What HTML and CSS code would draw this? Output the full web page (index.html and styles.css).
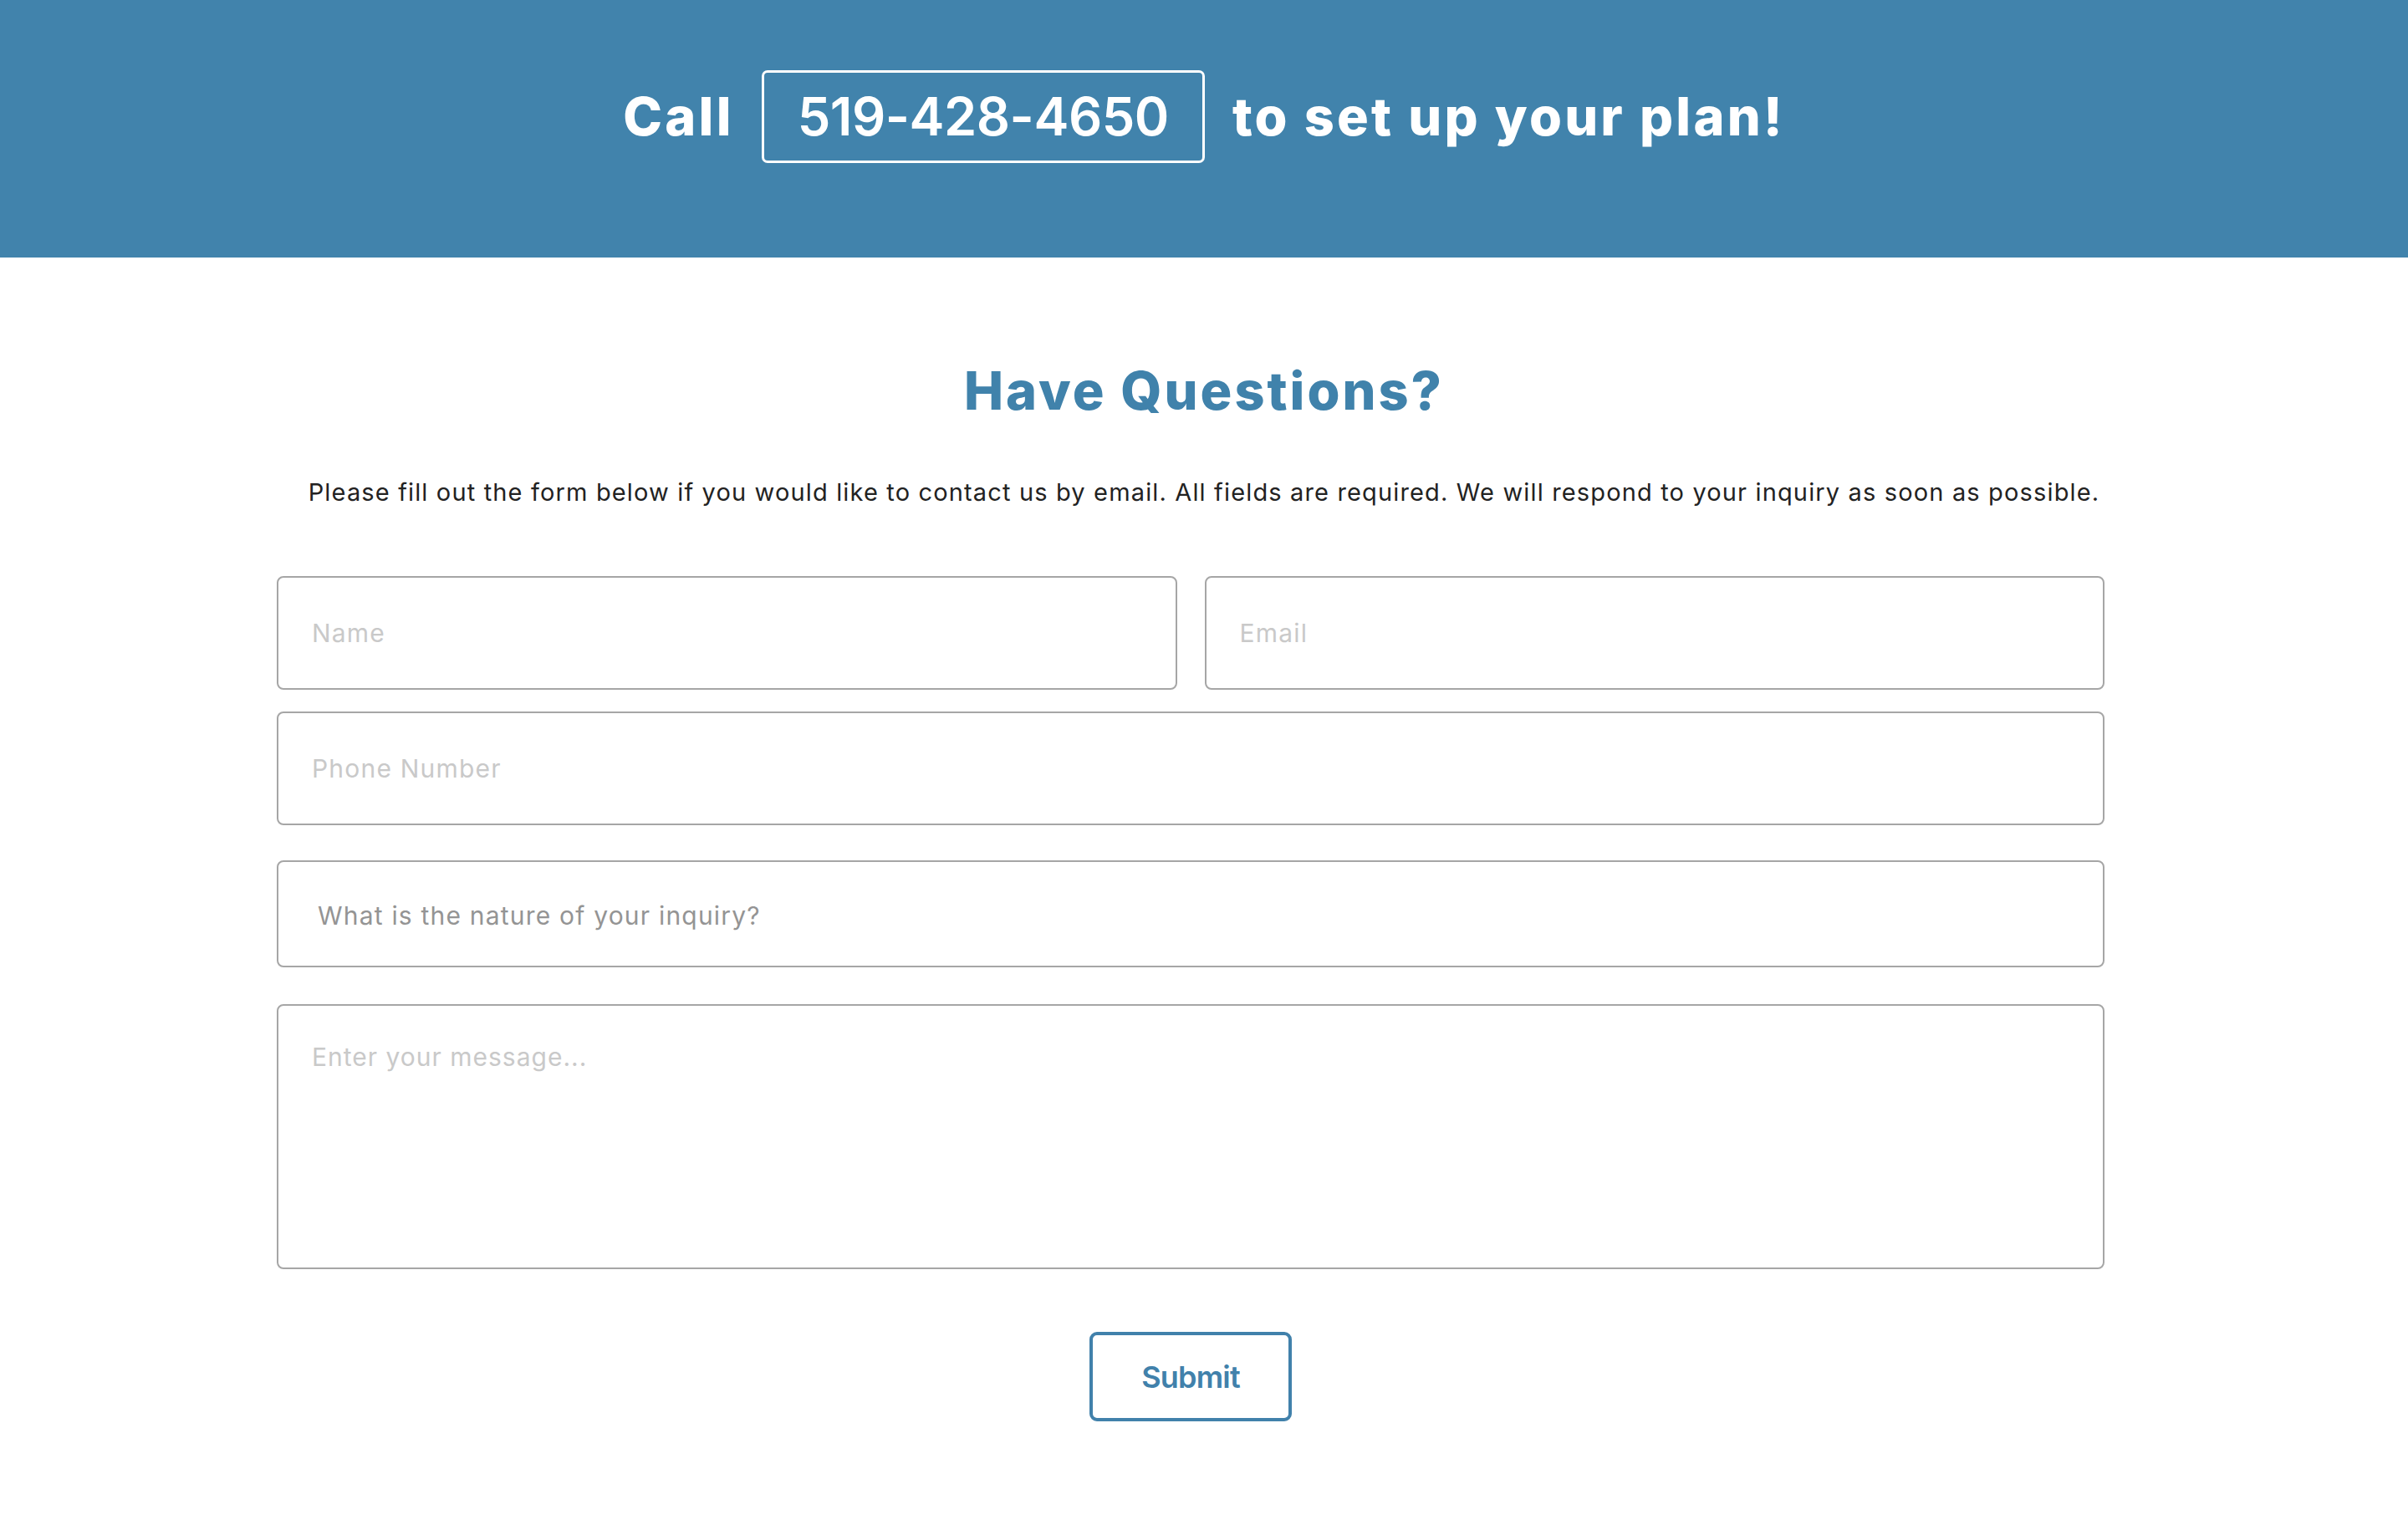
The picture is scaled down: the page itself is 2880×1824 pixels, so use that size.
FILE: index.html
```html
<!DOCTYPE html>
<html lang="en">
<head>
  <meta charset="UTF-8">
  <meta name="viewport" content="width=device-width, initial-scale=1.0">
  <title>Contact</title>
  <link rel="stylesheet" href="styles.css">
</head>
<body>
  <header class="call-bar">
    <span class="call-text">Call</span>
    <a class="phone-box" href="tel:5194284650">519-428-4650</a>
    <span class="call-text">to set up your plan!</span>
  </header>

  <section class="intro">
    <h2>Have Questions?</h2>
    <p>Please fill out the form below if you would like to contact us by email. All fields are required. We will respond to your inquiry as soon as possible.</p>
  </section>

  <form class="contact-form">
    <div class="row">
      <input type="text" placeholder="Name">
      <input type="email" placeholder="Email">
    </div>
    <input class="full" type="tel" placeholder="Phone Number">

    <select class="inquiry">
      <option>What is the nature of your inquiry?</option>
      <option>General question</option>
      <option>Plans</option>
    </select>

    <textarea placeholder="Enter your message..."></textarea>

    <div class="actions">
      <button type="submit">Submit</button>
    </div>
  </form>
</body>
</html>
```

FILE: styles.css
```css
* {
  box-sizing: border-box;
}

body {
  margin: 0;
  background: #ffffff;
  font-family: Inter, "Open Sans", sans-serif;
  color: #222222;
}

/* top bar */
.call-bar {
  height: 308px;
  padding-top: 84px;
  background: #4183ac;
  display: flex;
  justify-content: center;
  align-items: flex-start;
  gap: 33px;
  color: #ffffff;
}

.call-text {
  font-size: 63px;
  font-weight: 800;
  line-height: 111px;
  letter-spacing: 3.2px;
}

.phone-box {
  height: 111px;
  padding: 0 40px;
  border: 3px solid #ffffff;
  border-radius: 7px;
  color: #ffffff;
  text-decoration: none;
  font-size: 63px;
  font-weight: 600;
  line-height: 105px;
  letter-spacing: -0.5px;
}

/* heading + text */
.intro {
  text-align: center;
  padding-top: 119px;
}

.intro h2 {
  margin: 0;
  font-size: 63px;
  font-weight: 800;
  line-height: 80px;
  letter-spacing: 3px;
  color: #4082ab;
}

.intro p {
  margin: 62px 0 0;
  font-size: 29px;
  line-height: 40px;
  letter-spacing: 1.15px;
  color: #222222;
}

/* form */
.contact-form {
  width: 2186px;
  box-sizing: content-box;
  margin: 80px auto 0;
  padding-right: 32px;
  display: flex;
  flex-direction: column;
}

.row {
  display: flex;
  gap: 33px;
}

.row input {
  flex: 1;
}

input,
select,
textarea {
  height: 136px;
  padding: 0 40px;
  border: 2px solid #a6a6a6;
  border-radius: 8px;
  background: #ffffff;
  font-family: inherit;
  font-size: 30px;
  letter-spacing: 1.2px;
  color: #333333;
  outline: none;
}

input::placeholder,
textarea::placeholder {
  color: #c9c9c9;
}

input.full {
  margin-top: 26px;
}

.inquiry {
  height: 128px;
  margin-top: 42px;
  padding-left: 47px;
  padding-top: 4px;
  appearance: none;
  -webkit-appearance: none;
  color: #949494;
}

textarea {
  height: 317px;
  margin-top: 44px;
  padding-top: 41px;
  line-height: 40px;
  letter-spacing: 1px;
  resize: none;
}

.actions {
  display: flex;
  justify-content: center;
  margin-top: 75px;
}

button {
  width: 242px;
  height: 107px;
  border: 4px solid #4181ab;
  border-radius: 9px;
  background: #ffffff;
  color: #4181ab;
  font-family: Inter, sans-serif;
  font-size: 36px;
  font-weight: 600;
  letter-spacing: -0.8px;
  cursor: pointer;
}
```
